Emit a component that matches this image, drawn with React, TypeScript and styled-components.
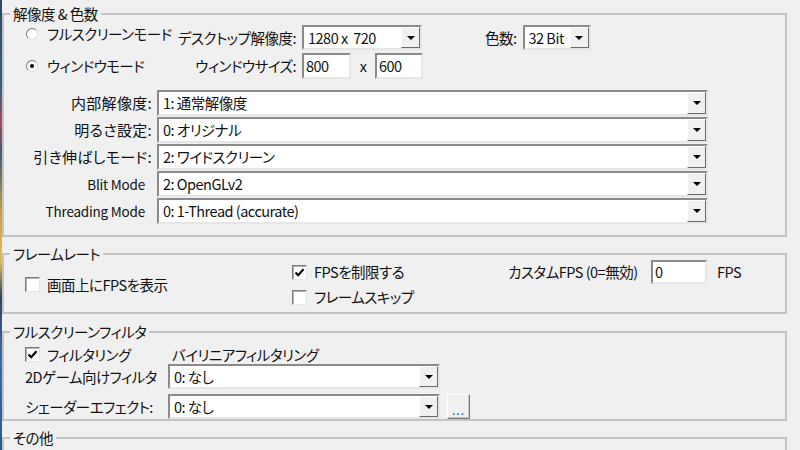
import React from 'react';
import styled, { createGlobalStyle } from 'styled-components';

const GlobalStyle = createGlobalStyle`
  html, body {
    margin: 0;
    padding: 0;
    background: #f0f0f0;
    overflow: hidden;
  }
  body {
    font-family: "Noto Sans CJK JP", "Noto Sans", sans-serif;
    font-size: 14.5px;
    line-height: 18px;
    letter-spacing: -0.5px;
    color: #111;
    font-feature-settings: "palt";
  }
`;

const Window = styled.div`
  display: flex;
  width: 800px;
  height: 450px;
  overflow: hidden;
  background: #f0f0f0;
`;

// bit of the window behind, peeking out on the left
const Strip = styled.div`
  width: 2px;
  flex: none;
  background: linear-gradient(
    180deg,
    #2b4a66 0%,
    #35607e 20%,
    #a8485c 27%,
    #3a5b78 34%,
    #d2a43c 48%,
    #e0bd4a 58%,
    #2c4460 66%,
    #3a6aa8 80%,
    #2a5690 100%
  );
`;

const Panel = styled.div`
  display: flex;
  flex-direction: column;
  padding-top: 13px;
`;

const Group = styled.section<{ $gap?: number; $h?: number }>`
  position: relative;
  flex: none;
  width: 785px;
  box-sizing: border-box;
  border: 2px solid #c4c4c4;
  margin-top: ${p => p.$gap ?? 0}px;
  ${p => (p.$h ? `height: ${p.$h}px;` : '')}
`;

const GroupTitle = styled.span`
  position: absolute;
  top: -10px;
  left: 6px;
  padding: 0 3px;
  background: #f0f0f0;
  white-space: nowrap;
`;

const GroupBody = styled.div<{ $pad: string }>`
  padding: ${p => p.$pad};
`;

/* ---------- controls ---------- */

const Sunken = styled.div<{ $w: number; $h: number }>`
  display: flex;
  align-items: center;
  flex: none;
  width: ${p => p.$w}px;
  height: ${p => p.$h}px;
  box-sizing: border-box;
  background: #fff;
  border: 2px solid;
  border-color: #8a8a8a #e6e6e6 #e6e6e6 #8a8a8a;
  white-space: pre;
`;

const FieldText = styled.span<{ $pad?: number }>`
  flex: 1;
  min-width: 0;
  padding-left: ${p => p.$pad ?? 4}px;
`;

const DropButton = styled.span`
  display: flex;
  align-items: center;
  justify-content: center;
  flex: none;
  width: 19px;
  height: 100%;
  box-sizing: border-box;
  background: #f0f0f0;
  border: 1px solid;
  border-color: #ffffff #6a6a6a #6a6a6a #ffffff;

  &::after {
    content: '';
    border-left: 4px solid transparent;
    border-right: 4px solid transparent;
    border-top: 4px solid #000;
  }
`;

const Combo: React.FC<{ w: number; h?: number; value: string }> = ({ w, h = 24, value }) => (
  <Sunken $w={w} $h={h}>
    <FieldText>{value}</FieldText>
    <DropButton />
  </Sunken>
);

const TextBox: React.FC<{ w: number; h?: number; value: string }> = ({ w, h = 26, value }) => (
  <Sunken $w={w} $h={h}>
    <FieldText $pad={2}>{value}</FieldText>
  </Sunken>
);

const RadioOption = styled.label<{ $top?: boolean }>`
  display: flex;
  align-items: center;
  gap: 9px;
  align-self: ${p => (p.$top ? 'start' : 'center')};
  white-space: nowrap;
`;

const RadioDot = styled.span<{ $on?: boolean }>`
  display: flex;
  align-items: center;
  justify-content: center;
  flex: none;
  width: 12px;
  height: 12px;
  box-sizing: border-box;
  border-radius: 50%;
  background: #fff;
  border: 1px solid;
  border-color: #7a7a7a #e0e0e0 #e0e0e0 #7a7a7a;

  &::after {
    content: '';
    display: ${p => (p.$on ? 'block' : 'none')};
    width: 4px;
    height: 4px;
    border-radius: 50%;
    background: #000;
  }
`;

const CheckOption = styled.label`
  display: flex;
  align-items: center;
  gap: 7px;
  white-space: nowrap;
`;

const CheckBox = styled.span`
  display: flex;
  align-items: center;
  justify-content: center;
  flex: none;
  width: 15px;
  height: 15px;
  box-sizing: border-box;
  background: #fff;
  border: 1px solid;
  border-color: #7a7a7a #e6e6e6 #e6e6e6 #7a7a7a;
  box-shadow: inset 1px 1px 0 #b4b4b4;
`;

const Check: React.FC<{ on?: boolean; children: React.ReactNode }> = ({ on, children }) => (
  <CheckOption>
    <CheckBox>
      {on && (
        <svg width="11" height="11" viewBox="0 0 11 11">
          <path d="M1.5 5.5 L4.2 8.2 L9.5 2.2" fill="none" stroke="#000" strokeWidth="2.2" />
        </svg>
      )}
    </CheckBox>
    <span>{children}</span>
  </CheckOption>
);

const SmallButton = styled.button`
  flex: none;
  width: 23px;
  height: 25px;
  margin-left: 7px;
  padding: 0 0 3px;
  box-sizing: border-box;
  display: flex;
  align-items: flex-end;
  justify-content: center;
  background: #f0f0f0;
  border: 1px solid;
  border-color: #ffffff #7a7a7a #7a7a7a #ffffff;
  box-shadow: inset -1px -1px 0 #c8c8c8;
  font-family: inherit;
  font-size: 12px;
  line-height: 10px;
  color: #2a4a80;
  letter-spacing: 1px;
`;

/* ---------- 解像度 & 色数 ---------- */

const ModeGrid = styled.div`
  display: grid;
  grid-template-columns: 146px 130px auto;
  grid-template-rows: 25px 26px;
  row-gap: 3px;
  align-items: center;
  padding-left: 22px;
`;

const FieldLabel = styled.span`
  text-align: right;
  padding-right: 6px;
  white-space: nowrap;
`;

const Controls = styled.div`
  display: flex;
  align-items: center;
  height: 100%;
`;

const Times = styled.span`
  width: 24px;
  text-align: center;
`;

const ColorLabel = styled.span`
  margin: 0 6px 0 63px;
  white-space: nowrap;
`;

const SettingList = styled.div`
  display: grid;
  grid-template-columns: 148px 551px;
  grid-auto-rows: 26px;
  column-gap: 5px;
  row-gap: 1px;
  align-items: center;
  margin-top: 11px;
`;

const SettingLabel = styled.span<{ $latin?: boolean }>`
  text-align: right;
  white-space: nowrap;
  padding-right: ${p => (p.$latin ? 7 : 0)}px;
  font-size: ${p => (p.$latin ? 13.5 : 15)}px;
  letter-spacing: ${p => (p.$latin ? -0.2 : 0.3)}px;
`;

/* ---------- フレームレート ---------- */

const RateRow = styled.div`
  display: flex;
  padding: 5px 0 3px 21px;
`;

const RateLeft = styled.div`
  display: flex;
  align-items: center;
  width: 267px;
`;

const RateMid = styled.div`
  display: grid;
  grid-auto-rows: 24px;
  row-gap: 1px;
  align-items: center;
  width: 216px;
`;

const RateRight = styled.div`
  display: flex;
  align-items: center;
  height: 24px;
`;

const CustomLabel = styled.span`
  flex: none;
  min-width: 143px;
  white-space: nowrap;
`;

const Unit = styled.span`
  margin-left: 10px;
`;

/* ---------- フルスクリーンフィルタ ---------- */

const FilterBody = styled.div`
  display: flex;
  flex-direction: column;
  padding: 12px 0 0 21px;
`;

const FilterRow = styled.div<{ $h: number; $gap?: number }>`
  display: flex;
  align-items: center;
  height: ${p => p.$h}px;
  margin-top: ${p => p.$gap ?? 0}px;
`;

const CheckCell = styled.div`
  width: 147px;
`;

const FilterLabel = styled.span`
  flex: none;
  width: 128px;
  margin-right: 15px;
  text-align: center;
  white-space: nowrap;
`;

const settings: { label: string; value: string; latin?: boolean }[] = [
  { label: '内部解像度:', value: '1: 通常解像度' },
  { label: '明るさ設定:', value: '0: オリジナル' },
  { label: '引き伸ばしモード:', value: '2: ワイドスクリーン' },
  { label: 'Blit Mode', value: '2: OpenGLv2', latin: true },
  { label: 'Threading Mode', value: '0: 1-Thread (accurate)', latin: true },
];

export default function App() {
  return (
    <>
      <GlobalStyle />
      <Window>
        <Strip />
        <Panel>
          <Group>
            <GroupTitle>解像度 &amp; 色数</GroupTitle>
            <GroupBody $pad="10px 0 11px 0">
              <ModeGrid>
                <RadioOption $top>
                  <RadioDot />
                  フルスクリーンモード
                </RadioOption>
                <FieldLabel>デスクトップ解像度:</FieldLabel>
                <Controls>
                  <Combo w={120} h={25} value="1280 x  720" />
                  <ColorLabel>色数:</ColorLabel>
                  <Combo w={68} h={25} value="32 Bit" />
                </Controls>

                <RadioOption>
                  <RadioDot $on />
                  ウィンドウモード
                </RadioOption>
                <FieldLabel>ウィンドウサイズ:</FieldLabel>
                <Controls>
                  <TextBox w={49} value="800" />
                  <Times>x</Times>
                  <TextBox w={48} value="600" />
                </Controls>
              </ModeGrid>

              <SettingList>
                {settings.map(s => (
                  <React.Fragment key={s.label}>
                    <SettingLabel $latin={s.latin}>{s.label}</SettingLabel>
                    <Combo w={551} h={26} value={s.value} />
                  </React.Fragment>
                ))}
              </SettingList>
            </GroupBody>
          </Group>

          <Group $gap={16}>
            <GroupTitle>フレームレート</GroupTitle>
            <RateRow>
              <RateLeft>
                <Check>画面上にFPSを表示</Check>
              </RateLeft>
              <RateMid>
                <Check on>FPSを制限する</Check>
                <Check>フレームスキップ</Check>
              </RateMid>
              <RateRight>
                <CustomLabel>カスタムFPS (0=無効)</CustomLabel>
                <TextBox w={56} h={24} value="0" />
                <Unit>FPS</Unit>
              </RateRight>
            </RateRow>
          </Group>

          <Group $gap={17}>
            <GroupTitle>フルスクリーンフィルタ</GroupTitle>
            <FilterBody>
              <FilterRow $h={19}>
                <CheckCell>
                  <Check on>フィルタリング</Check>
                </CheckCell>
                <span>バイリニアフィルタリング</span>
              </FilterRow>
              <FilterRow $h={25}>
                <FilterLabel>2Dゲーム向けフィルタ</FilterLabel>
                <Combo w={272} h={25} value="0: なし" />
              </FilterRow>
              <FilterRow $h={25} $gap={5}>
                <FilterLabel>シェーダーエフェクト:</FilterLabel>
                <Combo w={272} h={25} value="0: なし" />
                <SmallButton>...</SmallButton>
              </FilterRow>
            </FilterBody>
          </Group>

          <Group $gap={16} $h={40}>
            <GroupTitle>その他</GroupTitle>
          </Group>
        </Panel>
      </Window>
    </>
  );
}
